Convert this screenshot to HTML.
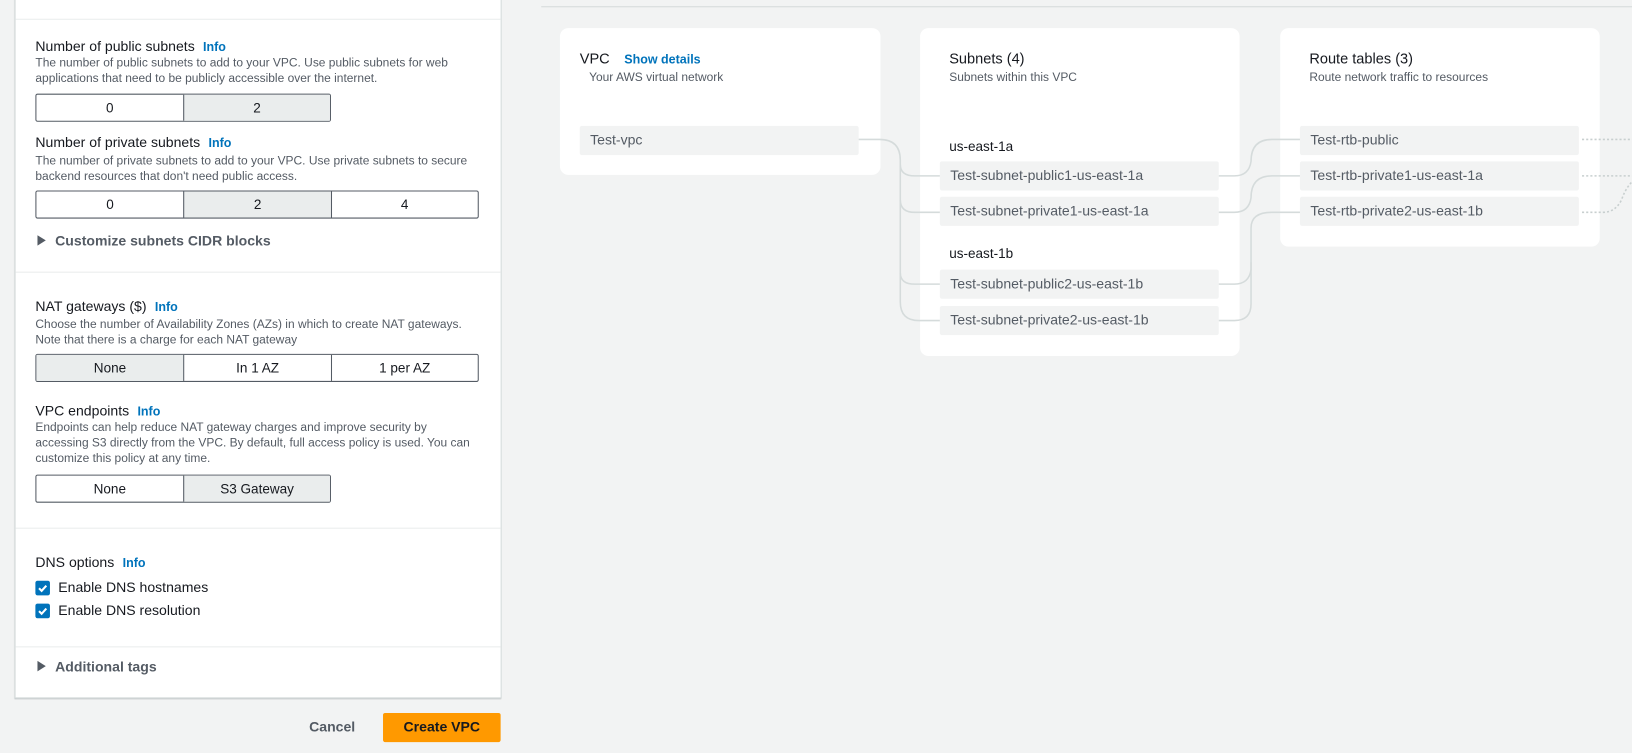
<!DOCTYPE html>
<html><head><meta charset="utf-8"><style>
*{box-sizing:border-box;margin:0;padding:0}
body{width:1632px;height:752px;background:#f2f3f3;font-family:"Liberation Sans",Arial,sans-serif;color:#16191f;position:relative;overflow:hidden}
#w{position:absolute;left:0;top:0;width:1568px;height:723px;transform:scale(1.0408);transform-origin:0 0}
.a{position:absolute}
.panel{left:14px;top:-2px;width:468px;height:673px;background:#fff;border:1px solid #d5dbdb;border-top:none;box-shadow:0 1px 1px rgba(0,28,36,.3)}
.hr{position:absolute;left:15px;width:466px;height:1px;background:#eaeded}
.lbl{font-size:13.5px;color:#16191f}
.info{color:#0073bb;font-weight:bold;font-size:12px;margin-left:8px}
.desc{font-size:11.5px;color:#545b64;line-height:15px}
.seg{display:flex;height:27px;border:1px solid #545b64;border-radius:2px}
.seg div{width:142px;text-align:center;line-height:25px;font-size:13px;color:#16191f;border-left:1px solid #545b64}
.seg div:first-child{border-left:none}
.seg .on{background:#eaeded}
.exp{font-size:13.5px;font-weight:bold;color:#545b64}
.exp:before{content:"";display:inline-block;border-left:8px solid #545b64;border-top:5px solid transparent;border-bottom:5px solid transparent;margin-right:9px}
.cb{display:flex;align-items:center;font-size:13.5px}
.cb span.b{width:14px;height:14px;background:#0073bb;border-radius:2px;margin-right:8px;position:relative}
.card{background:#fff;border-radius:8px}
.t{font-size:14px;color:#16191f}
.s{font-size:11.5px;color:#545b64}
.row{position:absolute;background:#f2f3f3;height:28px;width:268px;font-size:13.5px;color:#545b64;line-height:28px;padding-left:10px;border-radius:2px}
</style></head><body><div id="w">
<div class="a panel"></div>
<div class="hr" style="top:18px"></div>
<div class="hr" style="top:261px"></div>
<div class="hr" style="top:507px"></div>
<div class="hr" style="top:621px"></div>

<div class="a lbl" style="left:34px;top:37px">Number of public subnets<span class="info">Info</span></div>
<div class="a desc" style="left:34px;top:54px;width:420px">The number of public subnets to add to your VPC. Use public subnets for web applications that need to be publicly accessible over the internet.</div>
<div class="a seg" style="left:34px;top:90px;width:284px"><div>0</div><div class="on">2</div></div>

<div class="a lbl" style="left:34px;top:129px">Number of private subnets<span class="info">Info</span></div>
<div class="a desc" style="left:34px;top:148px;width:425px">The number of private subnets to add to your VPC. Use private subnets to secure backend resources that don't need public access.</div>
<div class="a seg" style="left:34px;top:183px;width:426px"><div>0</div><div class="on">2</div><div>4</div></div>
<div class="a exp" style="left:36px;top:224px">Customize subnets CIDR blocks</div>

<div class="a lbl" style="left:34px;top:287px">NAT gateways ($)<span class="info">Info</span></div>
<div class="a desc" style="left:34px;top:305px;width:425px">Choose the number of Availability Zones (AZs) in which to create NAT gateways. Note that there is a charge for each NAT gateway</div>
<div class="a seg" style="left:34px;top:340px;width:426px"><div class="on">None</div><div>In 1 AZ</div><div>1 per AZ</div></div>

<div class="a lbl" style="left:34px;top:387px">VPC endpoints<span class="info">Info</span></div>
<div class="a desc" style="left:34px;top:404px;width:425px">Endpoints can help reduce NAT gateway charges and improve security by accessing S3 directly from the VPC. By default, full access policy is used. You can customize this policy at any time.</div>
<div class="a seg" style="left:34px;top:456px;width:284px"><div>None</div><div class="on">S3 Gateway</div></div>

<div class="a lbl" style="left:34px;top:533px">DNS options<span class="info">Info</span></div>
<div class="a cb" style="left:34px;top:557px"><span class="b"><svg width="14" height="14" style="position:absolute;left:0;top:0"><path d="M3.5 7.2l2.5 2.5 4.5-5" stroke="#fff" stroke-width="2" fill="none"/></svg></span>Enable DNS hostnames</div>
<div class="a cb" style="left:34px;top:579px"><span class="b"><svg width="14" height="14" style="position:absolute;left:0;top:0"><path d="M3.5 7.2l2.5 2.5 4.5-5" stroke="#fff" stroke-width="2" fill="none"/></svg></span>Enable DNS resolution</div>
<div class="a exp" style="left:36px;top:633px">Additional tags</div>

<div class="a" style="left:297px;top:691px;font-size:13.5px;font-weight:bold;color:#545b64">Cancel</div>
<div class="a" style="left:368px;top:685px;width:113px;height:28px;background:#ff9900;border-radius:2px;font-size:13.5px;font-weight:bold;color:#16191f;text-align:center;line-height:28px">Create VPC</div>

<div class="a" style="left:520px;top:6px;width:1112px;height:1px;background:#d5dbdb"></div>

<div class="a card" style="left:538px;top:27px;width:308px;height:141px"></div>
<div class="a t" style="left:557px;top:48px">VPC<span class="info" style="margin-left:14px">Show details</span></div>
<div class="a s" style="left:566px;top:69px">Your AWS virtual network</div>
<div class="row" style="left:557px;top:121px">Test-vpc</div>

<div class="a card" style="left:884px;top:27px;width:307px;height:315px"></div>
<div class="a t" style="left:912px;top:48px">Subnets (4)</div>
<div class="a s" style="left:912px;top:69px">Subnets within this VPC</div>
<div class="a t" style="left:912px;top:133px;font-size:13px">us-east-1a</div>
<div class="row" style="left:903px;top:155px">Test-subnet-public1-us-east-1a</div>
<div class="row" style="left:903px;top:189px">Test-subnet-private1-us-east-1a</div>
<div class="a t" style="left:912px;top:236px;font-size:13px">us-east-1b</div>
<div class="row" style="left:903px;top:259px">Test-subnet-public2-us-east-1b</div>
<div class="row" style="left:903px;top:294px">Test-subnet-private2-us-east-1b</div>

<div class="a card" style="left:1230px;top:27px;width:307px;height:210px"></div>
<div class="a t" style="left:1258px;top:48px">Route tables (3)</div>
<div class="a s" style="left:1258px;top:69px">Route network traffic to resources</div>
<div class="row" style="left:1249px;top:121px">Test-rtb-public</div>
<div class="row" style="left:1249px;top:155px">Test-rtb-private1-us-east-1a</div>
<div class="row" style="left:1249px;top:189px">Test-rtb-private2-us-east-1b</div>

<svg class="a" style="left:0;top:0" width="1568" height="723" fill="none" stroke="#d5dbdb" stroke-width="1.5">
<path d="M825 134h20q20 0 20 20v136q0 18 18 18h20"/>
<path d="M865 158q0 11 14 11h24M865 192q0 12 14 12h24M865 262q0 11 14 11h24"/>
<path d="M1171 169h15q14 0 16 -14q0 -21 20 -21h27"/>
<path d="M1171 204h15q14 0 16 -14q0 -21 20 -21h27"/>
<path d="M1171 273h15q14 0 16 -14v-40q0 -15 20 -15h27"/>
<path d="M1171 308h15q16 0 16 -16v-40"/>
<g stroke-dasharray="2 2" stroke="#c8cfcf">
<path d="M1520 134h112M1520 169h112M1520 204h20q12 0 18 -12q6 -18 20 -24"/>
</g>
</svg>
</div></body></html>
